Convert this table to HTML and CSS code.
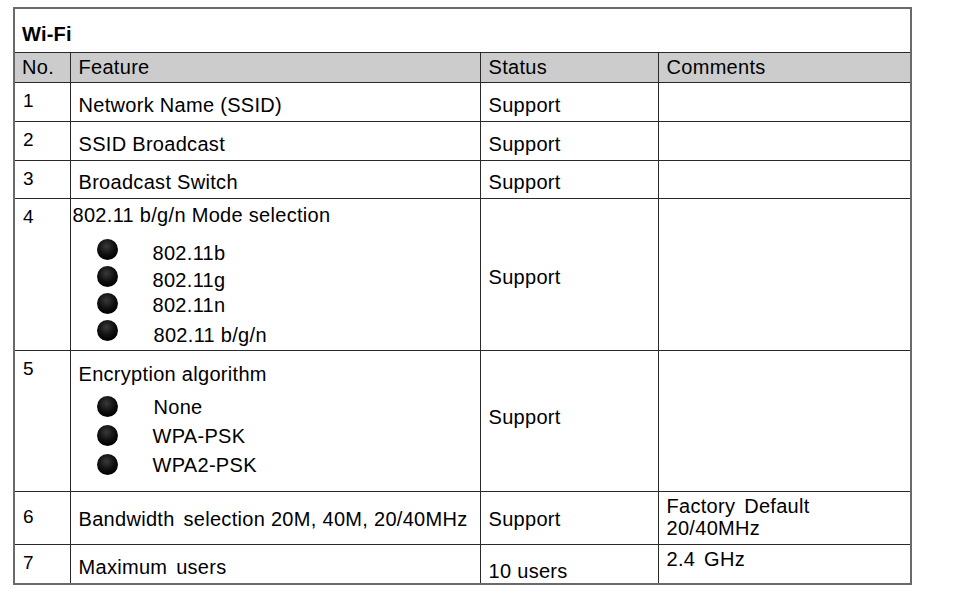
FILE: index.html
```html
<!DOCTYPE html>
<html>
<head>
<meta charset="utf-8">
<link rel="stylesheet" href="styles.css">
</head>
<body>
<table class="spec">
  <colgroup>
    <col class="c-no">
    <col class="c-feat">
    <col class="c-status">
    <col class="c-comm">
  </colgroup>
  <tr class="r-title"><td colspan="4" class="title">Wi-Fi</td></tr>
  <tr class="r-head">
    <td class="head">No.</td>
    <td class="head">Feature</td>
    <td class="head">Status</td>
    <td class="head">Comments</td>
  </tr>
  <tr class="r-1">
    <td class="no">1</td>
    <td class="feat">Network Name (SSID)</td>
    <td class="stat">Support</td>
    <td class="comm"></td>
  </tr>
  <tr class="r-2">
    <td class="no">2</td>
    <td class="feat">SSID Broadcast</td>
    <td class="stat">Support</td>
    <td class="comm"></td>
  </tr>
  <tr class="r-3">
    <td class="no">3</td>
    <td class="feat">Broadcast Switch</td>
    <td class="stat">Support</td>
    <td class="comm"></td>
  </tr>
  <tr class="r-4">
    <td class="no">4</td>
    <td class="feat list-cell">
      <div class="list-title tight">802.11 b/g/n Mode selection</div>
      <ul class="bullets modes">
        <li><span class="dot"></span><span class="txt">802.11b</span></li>
        <li><span class="dot"></span><span class="txt">802.11g</span></li>
        <li><span class="dot"></span><span class="txt">802.11n</span></li>
        <li><span class="dot"></span><span class="txt shift">802.11 b/g/n</span></li>
      </ul>
    </td>
    <td class="stat">Support</td>
    <td class="comm"></td>
  </tr>
  <tr class="r-5">
    <td class="no">5</td>
    <td class="feat list-cell">
      <div class="list-title enc">Encryption algorithm</div>
      <ul class="bullets encs">
        <li><span class="dot"></span><span class="txt">None</span></li>
        <li><span class="dot"></span><span class="txt">WPA-PSK</span></li>
        <li><span class="dot"></span><span class="txt">WPA2-PSK</span></li>
      </ul>
    </td>
    <td class="stat stat-up">Support</td>
    <td class="comm"></td>
  </tr>
  <tr class="r-6">
    <td class="no no-mid">6</td>
    <td class="feat feat-6"><span class="ws">Bandwidth selection</span> 20M, 40M, 20/40MHz</td>
    <td class="stat stat-6">Support</td>
    <td class="comm comm-top"><span class="ws">Factory Default</span><br>20/40MHz</td>
  </tr>
  <tr class="r-7">
    <td class="no">7</td>
    <td class="feat"><span class="ws">Maximum users</span></td>
    <td class="stat stat-low">10 users</td>
    <td class="comm comm-top"><span class="ws">2.4 GHz</span></td>
  </tr>
</table>
</body>
</html>
```
FILE: styles.css
```css
html, body {
  margin: 0;
  padding: 0;
  background: #ffffff;
}
body {
  padding: 7px 0 0 13px;
  font-family: "Liberation Sans", Arial, sans-serif;
  color: #000;
}
.spec {
  border-collapse: collapse;
  width: 897px;
  table-layout: fixed;
  border: 2px solid #6a6a6a;
  font-size: 20px;
  letter-spacing: 0.3px;
}
.c-no { width: 56px; }
.c-feat { width: 410px; }
.c-status { width: 178px; }
.c-comm { width: 253px; }

.spec td {
  border: 1px solid #2a2a2a;
  padding: 0 0 0 8px;
  vertical-align: middle;
  line-height: 22px;
  white-space: nowrap;
}
.ws { word-spacing: 3px; }
.r-title { height: 44px; }
.r-head { height: 30px; }
.r-1 { height: 39px; }
.r-2 { height: 39px; }
.r-3 { height: 38px; }
.r-4 { height: 152px; }
.r-5 { height: 141px; }
.r-6 { height: 53px; }
.r-7 { height: 40px; }

.spec td.title {
  font-weight: bold;
  padding: 7px 0 0 7px;
  font-size: 20px;
  letter-spacing: 0.2px;
}
.spec td.head {
  background: #cccccc;
  padding-top: 0;
}
.spec td.head:first-child { padding-left: 7px; }

.spec td.no {
  vertical-align: top;
  padding: 7px 0 0 8px;
  font-size: 19px;
}
.spec td.no-mid { padding-top: 14px; }

.spec td.feat { padding-top: 6px; }
.spec td.feat-6 { padding-top: 3px; }
.spec td.stat { padding-top: 6px; }
.spec td.stat-6 { padding-top: 3px; }
.spec td.stat-up { padding-top: 0; padding-bottom: 8px; }
.spec td.stat-low { padding-top: 15px; }
.spec td.comm-top {
  vertical-align: top;
  padding-top: 3px;
  line-height: 22px;
}

.spec td.list-cell {
  vertical-align: top;
  padding: 0;
}
.list-title {
  padding-top: 5px;
  line-height: 22px;
}
.list-title.tight { padding-left: 2px; }
.list-title.enc { padding-left: 8px; padding-top: 12px; }

.bullets {
  list-style: none;
  margin: 0;
  padding: 0 0 0 26px;
}
.bullets li {
  display: flex;
  align-items: center;
  height: 27px;
}
.modes { padding-top: 10px; }
.encs { padding-top: 7px; }
.encs li { height: 29px; }
.dot {
  flex: none;
  width: 21px;
  height: 21px;
  border-radius: 50%;
  background: radial-gradient(circle at 45% 35%, #3a3a3a 0%, #101010 45%, #000 75%);
}
.txt {
  margin-left: 35px;
  position: relative;
  top: 4px;
}
.modes li:nth-child(3) .txt { top: 2px; }
.txt.shift { margin-left: 36px; top: 5px; }
.encs .txt { top: 1px; margin-left: 35px; }
.encs li:first-child .txt { margin-left: 36px; }
```
